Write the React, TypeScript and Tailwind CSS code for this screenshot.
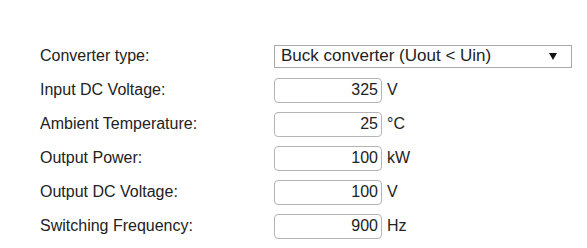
import React from "react";

const rows = [
	{ label: "Input DC Voltage:", value: "325", unit: "V" },
	{ label: "Ambient Temperature:", value: "25", unit: "°C" },
	{ label: "Output Power:", value: "100", unit: "kW" },
	{ label: "Output DC Voltage:", value: "100", unit: "V" },
	{ label: "Switching Frequency:", value: "900", unit: "Hz" },
];

export default function App() {
	return (
		<div className="w-[587px] h-[248px] bg-white pl-[40px] pt-[39px] text-[16px] text-[#222] font-['Liberation_Sans',Arial,sans-serif]">
			<div className="grid grid-cols-[234px_auto] auto-rows-[34px] items-center">
				<div>Converter type:</div>
				<div className="flex items-center justify-between w-[298px] h-[23px] border border-[#a9a9a9] bg-white pl-[6px] pr-[14px]">
					<span className="text-[17px]">Buck converter (Uout &lt; Uin)</span>
					<svg width="8" height="7" viewBox="0 0 8 7">
						<path d="M0 0 H8 L4 7 Z" fill="#111" />
					</svg>
				</div>

				{rows.map((row) => (
					<React.Fragment key={row.label}>
						<div>{row.label}</div>
						<div className="flex items-center">
							<input
								readOnly
								value={row.value}
								className="w-[108px] h-[25px] border border-[#b4b4b4] rounded-[4px] text-right pr-[3px] outline-none bg-white text-[#222]"
							/>
							<span className="ml-[5px]">{row.unit}</span>
						</div>
					</React.Fragment>
				))}
			</div>
		</div>
	);
}
